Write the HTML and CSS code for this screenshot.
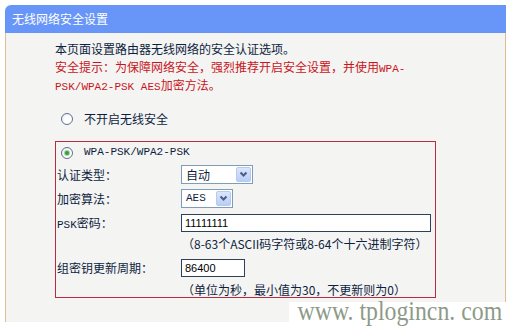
FILE: index.html
```html
<!DOCTYPE html>
<html lang="zh-CN">
<head>
    <meta charset="UTF-8" />
    <title>无线网络安全设置</title>
    <link rel="stylesheet" href="styles.css">
</head>
<body>
<div class="panel">
    <div class="panel-head">无线网络安全设置</div>
    <div class="panel-body">
        <p class="intro">本页面设置路由器无线网络的安全认证选项。</p>
        <p class="warn">安全提示：为保障网络安全，强烈推荐开启安全设置，并使用<span class="en">WPA-</span><br><span class="en">PSK/WPA2-PSK AES</span>加密方法。</p>

        <div class="radio-row">
            <span class="radio"></span>
            <span>不开启无线安全</span>
        </div>

        <div class="box">
            <div class="radio-row inner">
                <span class="radio checked"></span>
                <span class="en">WPA-PSK/WPA2-PSK</span>
            </div>

            <div class="label">认证类型：</div>
            <div class="field">
                <div class="select select-auth">
                    <span>自动</span>
                    <span class="arrow"><svg width="9" height="7" viewBox="0 0 9 7"><polyline points="1.5,1.5 4.5,4.5 7.5,1.5" fill="none" stroke="#4a5f86" stroke-width="2"/></svg></span>
                </div>
            </div>

            <div class="label">加密算法：</div>
            <div class="field">
                <div class="select select-enc">
                    <span class="en">AES</span>
                    <span class="arrow"><svg width="9" height="7" viewBox="0 0 9 7"><polyline points="1.5,1.5 4.5,4.5 7.5,1.5" fill="none" stroke="#4a5f86" stroke-width="2"/></svg></span>
                </div>
            </div>

            <div class="label"><span class="en">PSK</span>密码：</div>
            <div class="field">
                <input class="input input-psk" type="text" value="11111111">
            </div>

            <div class="hint">（8-63个ASCII码字符或8-64个十六进制字符）</div>

            <div class="label">组密钥更新周期：</div>
            <div class="field">
                <input class="input input-period" type="text" value="86400">
            </div>

            <div class="hint">（单位为秒，最小值为30，不更新则为0）</div>
        </div>
    </div>
</div>

<div class="watermark"><span>www. tplogincn. com</span></div>
</body>
</html>
```

FILE: styles.css
```css
body {
    margin: 0;
    width: 512px;
    height: 326px;
    overflow: hidden;
    position: relative;
    background: #fff;
    font-family: "Noto Sans CJK SC", sans-serif;
    font-size: 12px;
    line-height: 18px;
    color: #0e1e40;
}

p {
    margin: 0;
}

.en {
    font-family: "Liberation Mono", monospace;
    font-size: 11px;
    line-height: 1;
}

.panel {
    margin: 5px 0 0 5px;
    width: 501px;
}

.panel-head {
    height: 28px;
    line-height: 28px;
    padding-left: 7px;
    background: #6896f8;
    color: #fff;
    border-top-left-radius: 6px;
}

.panel-body {
    height: 289px;
    box-sizing: border-box;
    padding: 7px 0 0 49px;
    background: #f4f4f3;
    border-left: 1px solid #e0bc90;
    border-right: 1px solid #e0bc90;
}

.warn {
    color: #c81422;
}

.radio-row {
    display: flex;
    align-items: center;
    gap: 11px;
    height: 18px;
    margin-top: 16px;
    padding-left: 6px;
}

.radio {
    width: 12px;
    height: 12px;
    box-sizing: border-box;
    border: 1px solid #5d7290;
    border-radius: 50%;
    background: radial-gradient(circle at 60% 60%, #fff 40%, #dcdfe4);
    display: flex;
    align-items: center;
    justify-content: center;
}

.radio.checked::after {
    content: "";
    width: 4px;
    height: 4px;
    border-radius: 50%;
    background: #3d9c3a;
    box-shadow: 0 0 0 1px #9fd39a;
}

.box {
    width: 381px;
    box-sizing: border-box;
    margin-top: 13px;
    border: 1px solid #b62c3e;
    display: grid;
    grid-template-columns: 125px 1fr;
    grid-template-rows: 21px 23px 25px 23px 20px 28px 15px;
    align-items: center;
}

.radio-row.inner {
    grid-column: 1 / -1;
    margin-top: 0;
    padding-left: 5px;
}

.label {
    padding-left: 1px;
}

.field {
    display: flex;
    align-items: center;
}

.select {
    height: 19px;
    box-sizing: border-box;
    border: 1px solid #7f9db9;
    background: #fff;
    display: flex;
    align-items: center;
    justify-content: space-between;
    padding: 0 1px 0 4px;
}

.select-auth {
    width: 72px;
}

.select-enc {
    width: 52px;
}

.arrow {
    width: 15px;
    height: 15px;
    box-sizing: border-box;
    border: 1px solid #b8c9ee;
    border-radius: 2px;
    background: linear-gradient(#dbe6fc, #b9cdf6);
    display: flex;
    align-items: center;
    justify-content: center;
}

.input {
    height: 18px;
    box-sizing: border-box;
    margin: 0;
    padding: 0 3px;
    border: 1px solid #2e3f58;
    background: #fff;
    font-family: "Liberation Sans", sans-serif;
    font-size: 11px;
    color: #000;
    outline: none;
}

.input-psk {
    width: 250px;
}

.input-period {
    width: 64px;
}

.hint {
    grid-column: 2;
    margin-left: 1px;
}

.watermark {
    position: absolute;
    right: 0;
    bottom: 0;
    width: 223px;
    height: 24px;
    background: #fff;
}

.watermark span {
    display: block;
    padding-left: 10px;
    font-family: "Liberation Serif", serif;
    font-size: 28px;
    line-height: 18px;
    color: #8d9a88;
    white-space: nowrap;
    transform: scaleX(0.85);
    transform-origin: left center;
}
```
